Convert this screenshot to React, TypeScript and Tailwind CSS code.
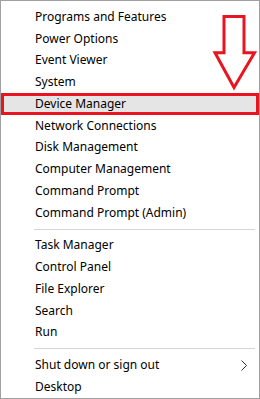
const groups = [
  [
    "Programs and Features",
    "Power Options",
    "Event Viewer",
    "System",
    "Device Manager",
    "Network Connections",
    "Disk Management",
    "Computer Management",
    "Command Prompt",
    "Command Prompt (Admin)",
  ],
  ["Task Manager", "Control Panel", "File Explorer", "Search", "Run"],
  ["Shut down or sign out", "Desktop"],
];

function Item({ label }: { label: string }) {
  const active = label === "Device Manager";
  const submenu = label === "Shut down or sign out";
  return (
    <div
      className={`flex h-[21.75px] items-center pr-[12px] ${
        active ? "border-[3px] border-[#e8141f] bg-[#e5e5e5] pl-[31px]" : "pl-[34px]"
      }`}
    >
      <span className="flex-1 leading-none">{label}</span>
      {submenu && (
        <svg width="6" height="11" viewBox="0 0 6 11">
          <path d="M0.5 0.5 L5.5 5.5 L0.5 10.5" fill="none" stroke="#303050" strokeWidth="1" />
        </svg>
      )}
    </div>
  );
}

export default function App() {
  return (
    <div
      className="relative h-[399px] w-[260px] border border-[#a0a0a0] bg-white pt-[5px] text-[12px] text-black"
      style={{ fontFamily: '"Noto Sans", "Open Sans", sans-serif' }}
    >
      {groups.map((g, i) => (
        <div key={i}>
          {i > 0 && <div className="my-[5px] ml-[33px] mr-[4px] h-px bg-[#d4d4d4]" />}
          {g.map((label) => (
            <Item key={label} label={label} />
          ))}
        </div>
      ))}
      <svg
        width="260"
        height="100"
        viewBox="0 0 260 100"
        className="pointer-events-none absolute left-[-1px] top-[-1px]"
      >
        <path
          d="M224 16.5 L244 16.5 L244 52.7 L254.5 52.7 L234 87.5 L215 52.7 L224 52.7 Z"
          fill="white"
          stroke="#e8141f"
          strokeWidth="3"
          strokeLinejoin="miter"
        />
      </svg>
    </div>
  );
}
